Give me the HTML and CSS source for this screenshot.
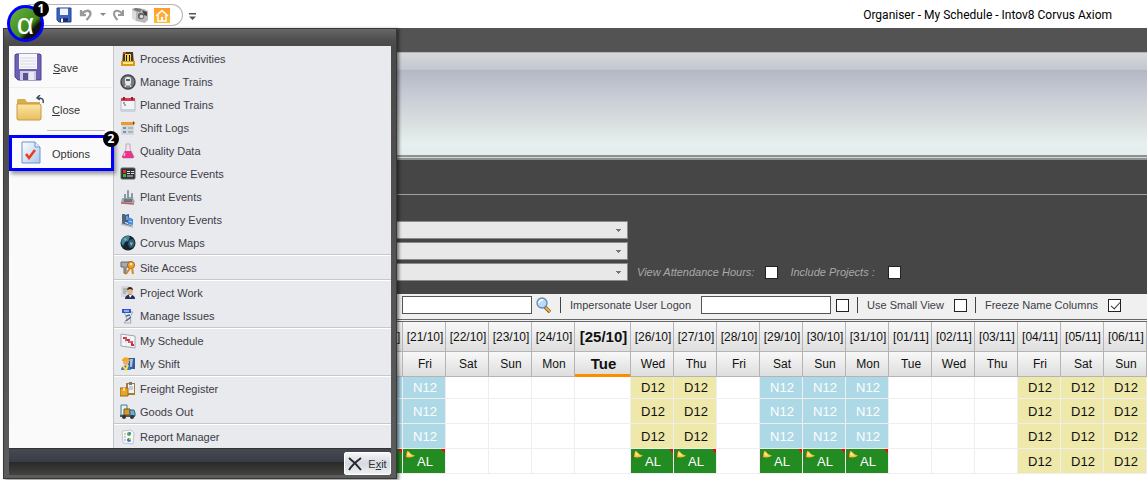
FILE: index.html
```
<!DOCTYPE html>
<html lang="en">
<head>
  <meta charset="UTF-8">
  <meta name="viewport" content="width=device-width, initial-scale=1.0">
  <title>Organiser - My Schedule - Intov8 Corvus Axiom</title>
  <link rel="stylesheet" href="styles.css">
</head>
<body>
<header class="titlebar">
  <div class="quickbar">
    <button type="button" aria-label="Save"><svg width="16" height="16" viewBox="0 0 16 16"><path d="M1 1h14v14H3l-2-2z" fill="#3a63c4" stroke="#21408c"/><path d="M4 1.500h8V8H4z" fill="#eef4fd"/><path d="M4 11h8v4H4z" fill="#1e2f63"/><path d="M5 11.500h2V15H5z" fill="#fff"/></svg></button>
    <button type="button" class="undo" aria-label="Undo"><svg width="16" height="16" viewBox="0 0 16 16"><path d="M3 3v5h5M3.500 7.500C6 3 12 2.500 12.500 6.500c.3 2.500-2 4-4 6.500" fill="none" stroke="#999" stroke-width="2.300"/></svg></button>
    <button type="button" class="drop" aria-label="Undo list"><svg width="6" height="4" viewBox="0 0 6 4"><path d="M0 0h6L3 3z" fill="#888"/></svg></button>
    <button type="button" aria-label="Redo"><svg width="14" height="16" viewBox="0 0 14 16"><path d="M11 3v5H6M10.500 7.500C8 3 2.500 2.500 2 6.500c-.3 2.500 1.500 4 3.500 6.500" fill="none" stroke="#999" stroke-width="2"/></svg></button>
    <button type="button" class="camera" aria-label="Snapshot"><svg width="16" height="16" viewBox="0 0 16 16"><path d="M0 2l3-1 9 1 4 2v9l-3 3-9-2-4-3z" fill="#b9b9b9"/><path d="M0 3l4 2v9l-4-3z" fill="#dcdcdc"/><path d="M1 2l3-1 6 1-2 3-4-1z" fill="#777"/><path d="M10 3l5 2v4l-3-1z" fill="#444"/><circle cx="9" cy="9" r="3.200" fill="#666"/><circle cx="9.500" cy="9.500" r="1.800" fill="#ddd"/></svg></button>
    <button type="button" class="home" aria-label="Home"><svg width="16" height="15" viewBox="0 0 16 15"><defs><linearGradient id="hg" x2="0" y2="1"><stop stop-color="#ff9a2e"/><stop offset="1" stop-color="#ffc02a"/></linearGradient></defs><path d="M0 0h16v15H0z" fill="url(#hg)"/><path d="M2 8l6-5.500L14 8M4 7v6h8V7" fill="#ffad3d" stroke="#fff" stroke-width="1.500"/><path d="M7 9h2v4H7z" fill="#fff"/></svg></button>
  </div>
  <button type="button" class="customise" aria-label="Customise toolbar"><svg width="7" height="8" viewBox="0 0 7 8"><path d="M0 0h7v1.500H0zM0 3.500h7L3.500 7z" fill="#555"/></svg></button>
  <h1>Organiser - My Schedule - Intov8 Corvus Axiom</h1>
</header>

<main class="workspace">
  <div class="tabstrip"></div>
  <div class="ribbon"></div>
  <div class="caption"></div>
  <form class="filters">
    <select aria-label="Site"><option></option></select>
    <select aria-label="Department"><option></option></select>
    <div class="filter-row">
      <select aria-label="Crew"><option></option></select>
      <label for="attendance">View Attendance Hours:</label>
      <input type="checkbox" id="attendance">
      <label for="projects">Include Projects :</label>
      <input type="checkbox" id="projects">
    </div>
  </form>

  <div class="toolbar">
    <input type="text" aria-label="Search">
    <button type="button" class="search" aria-label="Search"><svg width="16" height="16" viewBox="0 0 16 16"><path d="M9 10l5 5" stroke="#7a5620" stroke-width="3.500"/><path d="M9.500 10.500l4.500 4" stroke="#f0b545" stroke-width="2"/><circle cx="6" cy="6" r="5" fill="#b8dcf7" stroke="#6689b5" stroke-width="1.300"/><path d="M3 6c0-2 2-3.500 4-3" stroke="#fff" stroke-width="1.500" fill="none"/></svg></button>
    <span class="divider"></span>
    <label for="logon">Impersonate User Logon</label>
    <input type="text" id="logon">
    <input type="checkbox" aria-label="Impersonate">
    <span class="divider"></span>
    <label for="small">Use Small View</label>
    <input type="checkbox" id="small">
    <span class="divider"></span>
    <label for="freeze">Freeze Name Columns</label>
    <input type="checkbox" id="freeze" checked>
  </div>

  <table class="schedule">
    <colgroup><col><col class="day" span="5"><col class="today"><col class="day" span="12"></colgroup>
    <thead>
      <tr class="dates"><th></th><th>[20/10]</th><th>[21/10]</th><th>[22/10]</th><th>[23/10]</th><th>[24/10]</th><th class="now">[25/10]</th><th>[26/10]</th><th>[27/10]</th><th>[28/10]</th><th>[29/10]</th><th>[30/10]</th><th>[31/10]</th><th>[01/11]</th><th>[02/11]</th><th>[03/11]</th><th>[04/11]</th><th>[05/11]</th><th>[06/11]</th></tr>
      <tr class="days"><th></th><th>Thu</th><th>Fri</th><th>Sat</th><th>Sun</th><th>Mon</th><th class="now">Tue</th><th>Wed</th><th>Thu</th><th>Fri</th><th>Sat</th><th>Sun</th><th>Mon</th><th>Tue</th><th>Wed</th><th>Thu</th><th>Fri</th><th>Sat</th><th>Sun</th></tr>
    </thead>
    <tbody>
      <tr class="clipped"><td></td><td class="n">N12</td><td class="n">N12</td><td></td><td></td><td></td><td></td><td class="d">D12</td><td class="d">D12</td><td></td><td class="n">N12</td><td class="n">N12</td><td class="n">N12</td><td></td><td></td><td></td><td class="d">D12</td><td class="d">D12</td><td class="d">D12</td></tr>
      <tr><td></td><td class="n">N12</td><td class="n">N12</td><td></td><td></td><td></td><td></td><td class="d">D12</td><td class="d">D12</td><td></td><td class="n">N12</td><td class="n">N12</td><td class="n">N12</td><td></td><td></td><td></td><td class="d">D12</td><td class="d">D12</td><td class="d">D12</td></tr>
      <tr><td></td><td class="n">N12</td><td class="n">N12</td><td></td><td></td><td></td><td></td><td class="d">D12</td><td class="d">D12</td><td></td><td class="n">N12</td><td class="n">N12</td><td class="n">N12</td><td></td><td></td><td></td><td class="d">D12</td><td class="d">D12</td><td class="d">D12</td></tr>
      <tr><td></td><td class="al">AL<svg><use href="#flag"/></svg></td><td class="al">AL<svg><use href="#flag"/></svg></td><td></td><td></td><td></td><td></td><td class="al">AL<svg><use href="#flag"/></svg></td><td class="al">AL<svg><use href="#flag"/></svg></td><td></td><td class="al">AL<svg><use href="#flag"/></svg></td><td class="al">AL<svg><use href="#flag"/></svg></td><td class="al">AL<svg><use href="#flag"/></svg></td><td></td><td></td><td></td><td class="d">D12</td><td class="d">D12</td><td class="d">D12</td></tr>
    </tbody>
  </table>
</main>

<svg class="defs"><symbol id="flag" viewBox="0 0 12 12"><path d="M3 1L0 11" stroke="#6b5a1c" stroke-width="1.200"/><path d="M3 1c3 0 2 3 8 4.500C9 7.500 5 8 2 7z" fill="#f5c431"/><path d="M4 2c2 1 1 2 4 3-2 1-3 1-5 0z" fill="#ffe88c"/></symbol></svg>

<nav class="appmenu">
  <div class="panes">
    <div class="commands">
      <button type="button" class="command">
        <svg width="28" height="28" viewBox="0 0 28 28"><path d="M1 2l1-1h24l1 1v25H4l-3-3z" fill="#6f5fb5" stroke="#51458f"/><path d="M5 1h18v15H5z" fill="#f6f7fa"/><path d="M6 5h16M6 8h16M6 11h16M6 14h16" stroke="#d5d8df"/><path d="M6 18h16v9H6z" fill="#c9cbe0"/><path d="M9 20h5v7H9z" fill="#5b4f96"/><path d="M15 19h5v8h-5z" fill="#e9eaf2"/></svg>
        <span><u>S</u>ave</span>
      </button>
      <button type="button" class="command">
        <svg width="28" height="28" viewBox="0 0 28 28"><defs><linearGradient id="fg" x2="0" y2="1"><stop stop-color="#fbe5a3"/><stop offset="1" stop-color="#e9bf5f"/></linearGradient></defs><path d="M1 24V5l1-1h7l2 3h13v17z" fill="#d9ac4e"/><path d="M1 24V9h23l1 1v14l-1 1H2z" fill="url(#fg)" stroke="#c79b42"/><path d="M27 8c1-4-1-5-5-5m2-3l-3 3 3 2" fill="none" stroke="#3c4a66" stroke-width="1.500"/></svg>
        <span><u>C</u>lose</span>
      </button>
      <hr>
      <button type="button" class="command options">
        <svg width="20" height="24" viewBox="0 0 20 24"><defs><linearGradient id="pg" x2="1" y2="1"><stop stop-color="#fff"/><stop offset="1" stop-color="#a9c8ee"/></linearGradient></defs><path d="M1 1h13l5 5v16H1z" fill="url(#pg)" stroke="#6b93cc"/><path d="M14 1v5h5" fill="#e4effc" stroke="#6b93cc"/><path d="M5 13l3 4 6-8" fill="none" stroke="#f03a16" stroke-width="2.500"/></svg>
        <span>Options</span><b class="badge">2</b>
      </button>
    </div>
    <ul class="modules">
      <li><a href="#"><svg viewBox="0 0 16 16"><path d="M3 1h10l1 13H2z" fill="#463626"/><path d="M5 3h6v7H5z" fill="#f7d04a"/><path d="M6 4h1v6H6zM9 4h1v6H9z" fill="#1c1815"/><path d="M1 10h14v5H1z" fill="#d99a17"/><path d="M3 11h10v2H3z" fill="#ffe584"/><path d="M3 1h3v2H3z" fill="#d5482b"/></svg>Process Activities</a></li>
      <li><a href="#"><svg viewBox="0 0 16 16"><circle cx="8" cy="8" r="7" fill="#777b80" stroke="#45484c" stroke-width="1.500"/><rect x="5" y="3" width="6" height="8" rx="2" fill="#e4e6e8"/><path d="M6 5h4v2H6z" fill="#5c6064"/><path d="M5 13l1-2h4l1 2" stroke="#eee" fill="none"/></svg>Manage Trains</a></li>
      <li><a href="#"><svg viewBox="0 0 16 16"><path d="M1 3h14v11H1z" fill="#f2f4f7" stroke="#b4bac4"/><path d="M1 1h14v3H1z" fill="#d93b4e"/><path d="M3 0h2v3H3zM11 0h2v3h-2z" fill="#8c2331"/><path d="M3 6h2M4 8h2" stroke="#555"/><path d="M1 12h14v2H1z" fill="#ccd1d9"/></svg>Planned Trains</a></li>
      <li><a href="#"><svg viewBox="0 0 16 16"><path d="M2 3h12v12H1z" fill="#d3d7dc"/><path d="M1 2h12l2 1-2 2H1z" fill="#eb9a2b"/><path d="M13 1l2 2-2 2" fill="#7a4a18"/><path d="M3 7h3v2H3zM3 11h3v2H3z" fill="#6c96c4"/><path d="M8 8h5M8 12h5" stroke="#8a929c"/></svg>Shift Logs</a></li>
      <li><a href="#"><svg viewBox="0 0 16 16"><path d="M6 1h4v5l4 8-1 1H3l-1-1 4-8z" fill="#f3e5ee" stroke="#b9a9b8"/><path d="M5 8h6l3 6-1 1H3l-1-1z" fill="#e8368f"/><path d="M5 10l-1 3" stroke="#ffb3d8" stroke-width="1.500"/></svg>Quality Data</a></li>
      <li><a href="#"><svg viewBox="0 0 16 16"><rect x="1" y="2" width="14" height="11" rx="1" fill="#303234" stroke="#5a5c5e"/><path d="M3 4h3v3H3z" fill="#e32b22"/><path d="M3 8h3v3H3z" fill="#35b53c"/><path d="M7 5.500h3M11 5.500h3M7 7.500h3M11 7.500h3M7 10h6" stroke="#ddd"/></svg>Resource Events</a></li>
      <li><a href="#"><svg viewBox="0 0 16 16"><path d="M1 14l1-5h2V5h2v4h1V1h2v7h2V4h2v5l2 4-3 2z" fill="#9aa7ab"/><path d="M4 10h8v3H4z" fill="#65767e"/><path d="M5 5v5M8 2v9M12 5v6" stroke="#7f8d92"/><path d="M1 14l13 1" stroke="#c75b60" stroke-width="1.500"/></svg>Plant Events</a></li>
      <li><a href="#"><svg viewBox="0 0 16 16"><path d="M5 3l4-1v9l-4-1z" fill="#2b62a8"/><path d="M8 5l5 2v6l-5-1z" fill="#4c8bd8"/><path d="M2 2h3v9l8 3H7l-5-2z" fill="#59656e"/><path d="M1 12l12 3" stroke="#b4bac2" stroke-width="1.500"/><path d="M6 5h2M6 7h2M9 9l3 1" stroke="#b9d7f5"/></svg>Inventory Events</a></li>
      <li><a href="#"><svg viewBox="0 0 16 16"><circle cx="8" cy="8" r="7.500" fill="#15252f"/><path d="M2 4c3-4 7-3 8-2L8 6l-3 1-2 4C1 9 1 6 2 4z" fill="#3c86a8"/><path d="M9 5l4-1c2 3 2 5 0 8l-3 1-2-4z" fill="#286085"/><path d="M4 3l3 1-2 2zM10 7l3 1-2 3z" fill="#b5b679"/></svg>Corvus Maps</a></li>
      <li class="split"><a href="#"><svg viewBox="0 0 16 16"><path d="M1 2h9v5H6v7l-2-1V7H1z" fill="#a6a9ad" stroke="#65686b"/><circle cx="11" cy="5" r="3.500" fill="#efa832" stroke="#9b671a"/><path d="M10 8l-4 6M12 8l1 6" stroke="#db8718" stroke-width="2"/><circle cx="11" cy="4" r="1" fill="#fff"/></svg>Site Access</a></li>
      <li class="split"><a href="#"><svg viewBox="0 0 16 16"><path d="M1 1h8v11H1z" fill="#d5d8da"/><path d="M3 4h4M3 6h4M3 8h3" stroke="#8c9296"/><circle cx="10" cy="6" r="3" fill="#e5b48b"/><path d="M7 5c0-4 6-4 6 0l-3-1z" fill="#32261e"/><path d="M5 14c0-6 10-6 10 0z" fill="#24325b"/><path d="M9 10l1 3 2-3z" fill="#fff"/></svg>Project Work</a></li>
      <li><a href="#"><svg viewBox="0 0 16 16"><path d="M4 4h9l-3 5 1 6H4l3-4z" fill="#e8eaf0" stroke="#a4a8b2"/><path d="M2 1h9v4H2z" fill="#2f55d3"/><path d="M4 3h5" stroke="#fff"/><path d="M6 8l4-1M6 13l5-4" stroke="#55668c" stroke-width="1.500"/></svg>Manage Issues</a></li>
      <li class="split"><a href="#"><svg viewBox="0 0 16 16"><path d="M1 1l14 2v12L1 13z" fill="#f7f8fa" stroke="#9ba6b4"/><path d="M3 5h3v2h3v2h3v3h2" fill="none" stroke="#d52b35" stroke-width="2"/><path d="M2 9h12M6 2v11M10 3v11" stroke="#c7ced8" stroke-width=".5"/></svg>My Schedule</a></li>
      <li><a href="#"><svg viewBox="0 0 16 16"><path d="M8 2h7v11H8z" fill="#365c9b"/><path d="M10 3h3l-1 8h-2z" fill="#a9c5e8"/><circle cx="6" cy="6" r="3" fill="#e7aa78"/><path d="M2 5c0-5 7-5 8 0z" fill="#f8a817"/><path d="M1 14c0-6 9-6 10 0z" fill="#377dc5"/><path d="M3 10l3 4 2-5" stroke="#ffe042" stroke-width="2" fill="none"/></svg>My Shift</a></li>
      <li class="split"><a href="#"><svg viewBox="0 0 16 16"><path d="M6 2h9v12H6z" fill="#a77a3b"/><path d="M8 3h6v9H8z" fill="#f0f1f2"/><path d="M9 1h3v3H9z" fill="#777"/><path d="M9 6h4M9 8h4" stroke="#a3a6a8"/><path d="M0 7h8v8H0z" fill="#e4a625" stroke="#9b6814"/><path d="M3 7v3h2V7" fill="#ffe083"/></svg>Freight Register</a></li>
      <li><a href="#"><svg viewBox="0 0 16 16"><path d="M1 1h6v10H1z" fill="#e5f0f2" stroke="#3b7f91"/><path d="M4 5h6v6H4z" fill="#d99929" stroke="#805414"/><path d="M10 6h4l1 3v3h-5z" fill="#68add4" stroke="#336482"/><path d="M0 12h15" stroke="#535a60" stroke-width="2"/><circle cx="4" cy="13" r="2" fill="#333"/><circle cx="12" cy="13" r="2" fill="#333"/></svg>Goods Out</a></li>
      <li class="split"><a href="#"><svg viewBox="0 0 16 16"><path d="M2 2l9-1 3 3-1 11-10-1z" fill="#f7f8f9" stroke="#c2c6ca"/><circle cx="9" cy="5" r="2" fill="#5aae45"/><path d="M9 5V3a2 2 0 012 2z" fill="#3875d1"/><circle cx="9" cy="11" r="2" fill="#367ac4"/><path d="M9 11V9a2 2 0 012 2z" fill="#eabf32"/><path d="M4 5h2M4 8h2M4 11h2" stroke="#9aa0a6"/></svg>Report Manager</a></li>
    </ul>
  </div>
  <div class="menu-foot">
    <button type="button" class="exit"><svg width="14" height="14" viewBox="0 0 14 14"><path d="M1 1c4 3 8 7 12 12M13 1C9 4 4 8 1 13" stroke="#26282c" stroke-width="2" fill="none"/></svg><span>E<u>x</u>it</span></button>
  </div>
</nav>
<button type="button" class="orb" aria-label="Application menu">α<b class="badge">1</b></button>
</body>
</html>
```
FILE: styles.css
```
* {
  box-sizing: border-box;
}
body {
  margin: 0;
  min-height: 100vh;
  position: relative;
  background: #fff;
  color: #333;
  font-family: "Liberation Sans", Arial, sans-serif;
  font-size: 11px;
}
button {
  padding: 0;
  border: none;
  background: none;
  color: inherit;
  font: inherit;
}
svg {
  flex: none;
  display: block;
}
.defs {
  display: none;
}

/* title bar */
.titlebar {
  height: 28px;
  padding-left: 28px;
  padding-right: 35px;
  display: flex;
  align-items: center;
}
.quickbar {
  height: 22px;
  width: 155px;
  margin-top: 2px;
  padding-left: 28px;
  display: flex;
  align-items: center;
  gap: 6px;
  border: 1px solid #b5b5b5;
  border-left: none;
  border-radius: 0 11px 11px 0;
}
.customise {
  margin-left: 6px;
  margin-top: 6px;
}
.titlebar h1 {
  margin: 0 0 0 auto;
  padding-top: 2px;
  color: #000;
  font: 12px Roboto, "Open Sans", sans-serif;
}

/* main window */
.workspace {
  margin-left: 3px;
}
.tabstrip {
  height: 24px;
  background: #535353;
}
.ribbon {
  height: 108px;
  border-top: 1px solid #b4b4b4;
  border-bottom: 5px double #8d918f;
  background: linear-gradient(#d5d7db, #c5c8d0 16%, #b3b8c4 17%, #c8ccd5 42%, #dae0e0 70%, #e7f0f0 90%, #e4ecec);
}
.caption {
  height: 35px;
  background: #464646;
  border-bottom: 1px solid #a0a0a0;
}
.filters {
  height: 99px;
  padding: 26px 0 0 200px;
  background: #464646;
  display: flex;
  flex-direction: column;
  gap: 3px;
}
.filters select {
  appearance: none;
  display: block;
  width: 425px;
  height: 18px;
  border: 1px solid #8a8a8a;
  border-radius: 0;
  background:
    linear-gradient(#777, #777) no-repeat right 6px top 7px / 5px 1px,
    linear-gradient(#777, #777) no-repeat right 7px top 8px / 3px 1px,
    linear-gradient(#777, #777) no-repeat right 8px top 9px / 1px 1px,
    #e8e8e8;
}
.filter-row {
  display: flex;
  align-items: center;
}
.filters label {
  color: #a9a9a9;
  font-style: italic;
  margin: 0 11px 0 9px;
}
.filters input + label {
  margin-left: 12px;
}
#projects {
  margin-left: 2px;
}
input[type="checkbox"] {
  appearance: none;
  flex: none;
  width: 13px;
  height: 13px;
  margin: 0;
  border: 1px solid #222;
  background: #fff;
}
input[type="checkbox"]:checked::after {
  content: "";
  display: block;
  width: 4px;
  height: 8px;
  margin: 0 0 0 4px;
  border: solid #333;
  border-width: 0 1px 1px 0;
  transform: rotate(42deg);
}
.toolbar {
  height: 28px;
  padding: 0 0 3px 399px;
  display: flex;
  align-items: center;
  background: #f0f0f0;
  border-bottom: 3px double #666;
  white-space: nowrap;
}
.toolbar input[type="text"] {
  width: 130px;
  height: 18px;
  padding: 0 2px;
  border: 1px solid #555;
}
.toolbar input + input {
  margin-left: 5px;
}
.toolbar label {
  margin: 0 10px 0 9px;
  color: #3c3c46;
}
.search {
  margin-left: 4px;
}
.divider {
  width: 1px;
  height: 16px;
  margin-left: 8px;
  background: #444;
}

/* schedule */
.schedule {
  width: 100%;
  table-layout: fixed;
  border-collapse: separate;
  border-spacing: 0;
  color: #111;
  font-size: 13px;
}
.day {
  width: 43px;
}
.today {
  width: 56px;
}
.schedule th, .schedule td {
  padding: 0 0 0 2px;
  border-right: 1px solid #eee;
  border-bottom: 1px solid #eee;
  text-align: center;
  white-space: nowrap;
}
.schedule th {
  border-color: #b4b4b4;
  background: linear-gradient(#f8f8f8, #dedede);
  font-size: 12px;
  font-weight: normal;
}
.schedule .now {
  font-size: 15px;
  font-weight: bold;
}
.dates th {
  height: 30px;
}
.days th {
  height: 25px;
}
.days .now {
  border-bottom: 3px solid #ff8c00;
}
.schedule td {
  height: 25px;
}
.schedule .clipped td {
  height: 22px;
}
.schedule .n {
  background: #add8e6;
  color: #fff;
}
.schedule .d {
  background: #eee8aa;
}
.schedule .al {
  position: relative;
  background: #228b22;
  color: #fff;
}
.al svg {
  position: absolute;
  top: 1px;
  left: 1px;
  width: 12px;
  height: 12px;
}
.al::after {
  content: "";
  position: absolute;
  top: 0;
  right: 0;
  border-top: 4px solid #f00;
  border-left: 4px solid transparent;
}

/* application menu */
.appmenu {
  position: absolute;
  top: 28px;
  left: 3px;
  width: 394px;
  padding: 17px 5px 3px;
  border: 1px solid #383838;
  background: linear-gradient(#686868, #505050 10px, #4a4a4a 17px, #5c5c5c);
  box-shadow: 2px 1px 3px rgba(0, 0, 0, 0.5);
}
.panes {
  display: flex;
  border-bottom: 1px solid #333;
}
.commands {
  width: 104px;
  flex: none;
  background: #fafafa;
}
.command {
  width: 100%;
  height: 42px;
  padding-left: 5px;
  display: flex;
  align-items: center;
  gap: 11px;
  text-align: left;
  border-bottom: 1px solid #eee;
}
.command span {
  padding-top: 2px;
}
.command + .command {
  padding-left: 7px;
  gap: 8px;
  border: none;
}
.commands hr {
  margin: 0 8px 4px 38px;
  border: none;
  border-top: 1px solid #bbb;
}
.commands .options {
  position: relative;
  width: 105px;
  height: 36px;
  padding-left: 9px;
  gap: 11px;
  border: 3px solid #00f;
  box-shadow: 2px 3px 4px rgba(0, 0, 0, 0.4);
}
.modules {
  flex: 1;
  margin: 0;
  padding: 1px 0 0;
  list-style: none;
  background: #e9eaee;
  border-left: 1px solid #c5c5c8;
}
.modules a {
  height: 23px;
  padding-left: 6px;
  display: flex;
  align-items: center;
  gap: 4px;
  color: #3c3c46;
  text-decoration: none;
}
.modules svg {
  width: 16px;
  height: 16px;
}
.modules .split {
  border-top: 1px solid #c8c8c8;
  box-shadow: inset 0 1px #fff;
  padding-top: 1px;
}
.menu-foot {
  height: 26px;
  padding-top: 3px;
  display: flex;
  justify-content: flex-end;
  background: linear-gradient(#464852, #3b3d46 48%, #292929 50%, #424240);
}
.exit {
  width: 47px;
  height: 23px;
  display: flex;
  align-items: center;
  justify-content: center;
  gap: 6px;
  border: 1px solid #fff;
  border-radius: 2px;
  background: linear-gradient(#f4f5f7, #d5dae0 50%, #eef1f3);
}
.orb {
  position: absolute;
  top: 5px;
  left: 7px;
  width: 37px;
  height: 37px;
  border: 3px solid #00f;
  border-radius: 50%;
  background: linear-gradient(135deg, #6eb043, #3c8c1c 60%, #111 72%);
  color: #fff;
  font: 30px/28px "Liberation Sans", Arial, sans-serif;
}
.badge {
  position: absolute;
  top: -7px;
  right: -8px;
  width: 16px;
  height: 16px;
  border-radius: 50%;
  background: #000;
  color: #fff;
  font: bold 12px/16px "Noto Sans", sans-serif;
  text-align: center;
}
```
